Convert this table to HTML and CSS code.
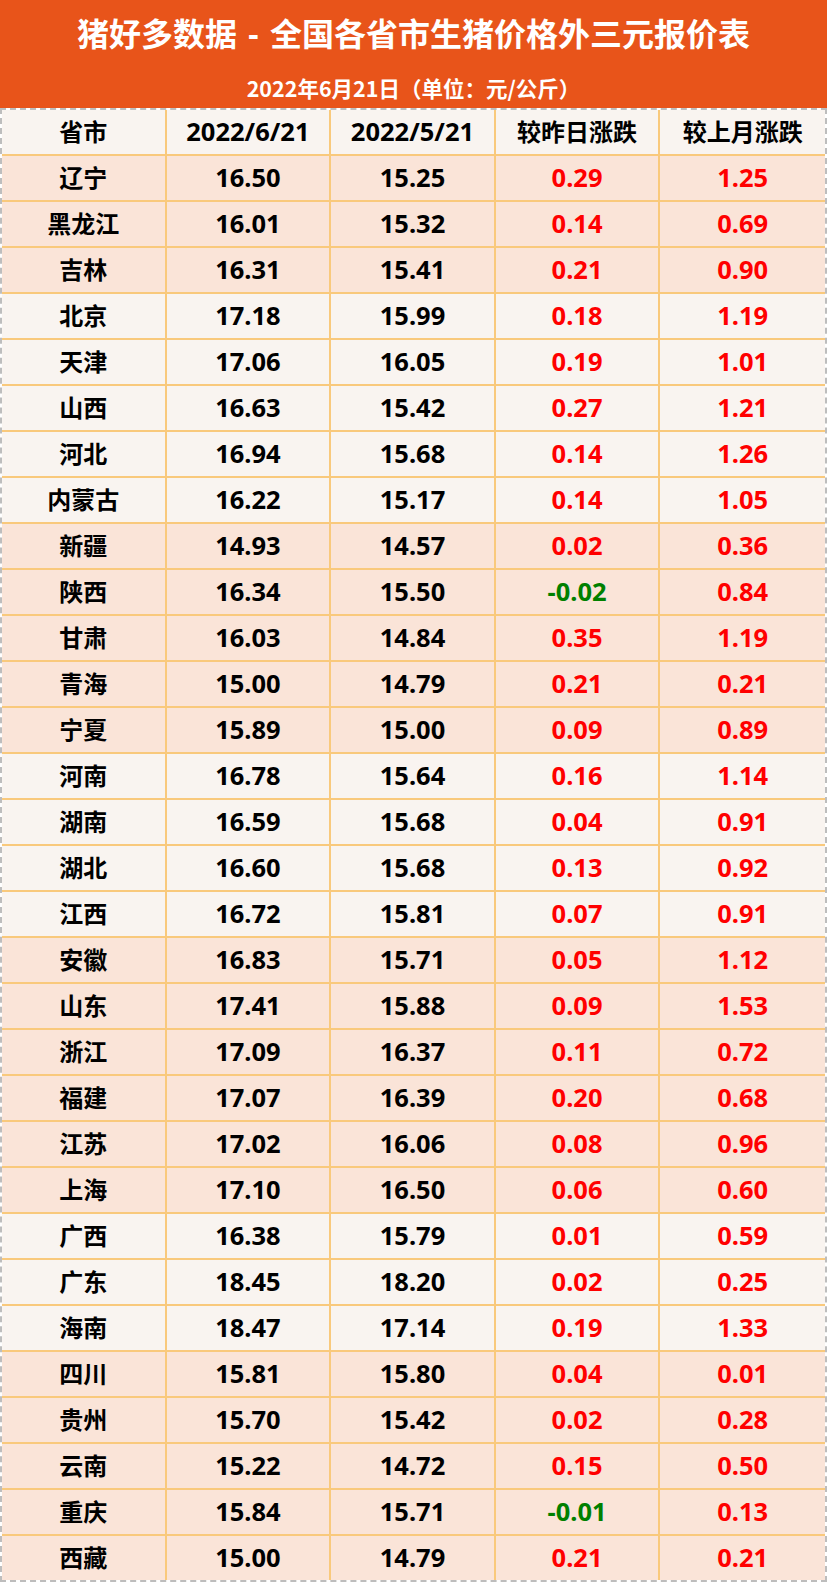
FILE: index.html
```html
<!DOCTYPE html>
<html lang="zh-CN">
<head>
<meta charset="utf-8">
<title>猪好多数据 - 全国各省市生猪价格外三元报价表</title>
<link rel="stylesheet" href="styles.css">
</head>
<body>
<div class="page">
  <header class="banner">
    <h1 class="banner-title">猪好多数据 - 全国各省市生猪价格外三元报价表</h1>
    <p class="banner-sub">2022年6月21日（单位：元/公斤）</p>
  </header>
  <table class="prices">
    <colgroup><col><col><col><col><col></colgroup>
    <thead>
      <tr class="light"><th>省市</th><th class="num">2022/6/21</th><th class="num">2022/5/21</th><th>较昨日涨跌</th><th>较上月涨跌</th></tr>
    </thead>
    <tbody>
      <tr class="peach"><td>辽宁</td><td class="num">16.50</td><td class="num">15.25</td><td class="num up">0.29</td><td class="num up">1.25</td></tr>
      <tr class="peach"><td>黑龙江</td><td class="num">16.01</td><td class="num">15.32</td><td class="num up">0.14</td><td class="num up">0.69</td></tr>
      <tr class="peach"><td>吉林</td><td class="num">16.31</td><td class="num">15.41</td><td class="num up">0.21</td><td class="num up">0.90</td></tr>
      <tr class="light"><td>北京</td><td class="num">17.18</td><td class="num">15.99</td><td class="num up">0.18</td><td class="num up">1.19</td></tr>
      <tr class="light"><td>天津</td><td class="num">17.06</td><td class="num">16.05</td><td class="num up">0.19</td><td class="num up">1.01</td></tr>
      <tr class="light"><td>山西</td><td class="num">16.63</td><td class="num">15.42</td><td class="num up">0.27</td><td class="num up">1.21</td></tr>
      <tr class="light"><td>河北</td><td class="num">16.94</td><td class="num">15.68</td><td class="num up">0.14</td><td class="num up">1.26</td></tr>
      <tr class="light"><td>内蒙古</td><td class="num">16.22</td><td class="num">15.17</td><td class="num up">0.14</td><td class="num up">1.05</td></tr>
      <tr class="peach"><td>新疆</td><td class="num">14.93</td><td class="num">14.57</td><td class="num up">0.02</td><td class="num up">0.36</td></tr>
      <tr class="peach"><td>陕西</td><td class="num">16.34</td><td class="num">15.50</td><td class="num down">-0.02</td><td class="num up">0.84</td></tr>
      <tr class="peach"><td>甘肃</td><td class="num">16.03</td><td class="num">14.84</td><td class="num up">0.35</td><td class="num up">1.19</td></tr>
      <tr class="peach"><td>青海</td><td class="num">15.00</td><td class="num">14.79</td><td class="num up">0.21</td><td class="num up">0.21</td></tr>
      <tr class="peach"><td>宁夏</td><td class="num">15.89</td><td class="num">15.00</td><td class="num up">0.09</td><td class="num up">0.89</td></tr>
      <tr class="light"><td>河南</td><td class="num">16.78</td><td class="num">15.64</td><td class="num up">0.16</td><td class="num up">1.14</td></tr>
      <tr class="light"><td>湖南</td><td class="num">16.59</td><td class="num">15.68</td><td class="num up">0.04</td><td class="num up">0.91</td></tr>
      <tr class="light"><td>湖北</td><td class="num">16.60</td><td class="num">15.68</td><td class="num up">0.13</td><td class="num up">0.92</td></tr>
      <tr class="light"><td>江西</td><td class="num">16.72</td><td class="num">15.81</td><td class="num up">0.07</td><td class="num up">0.91</td></tr>
      <tr class="peach"><td>安徽</td><td class="num">16.83</td><td class="num">15.71</td><td class="num up">0.05</td><td class="num up">1.12</td></tr>
      <tr class="peach"><td>山东</td><td class="num">17.41</td><td class="num">15.88</td><td class="num up">0.09</td><td class="num up">1.53</td></tr>
      <tr class="peach"><td>浙江</td><td class="num">17.09</td><td class="num">16.37</td><td class="num up">0.11</td><td class="num up">0.72</td></tr>
      <tr class="peach"><td>福建</td><td class="num">17.07</td><td class="num">16.39</td><td class="num up">0.20</td><td class="num up">0.68</td></tr>
      <tr class="peach"><td>江苏</td><td class="num">17.02</td><td class="num">16.06</td><td class="num up">0.08</td><td class="num up">0.96</td></tr>
      <tr class="peach"><td>上海</td><td class="num">17.10</td><td class="num">16.50</td><td class="num up">0.06</td><td class="num up">0.60</td></tr>
      <tr class="light"><td>广西</td><td class="num">16.38</td><td class="num">15.79</td><td class="num up">0.01</td><td class="num up">0.59</td></tr>
      <tr class="light"><td>广东</td><td class="num">18.45</td><td class="num">18.20</td><td class="num up">0.02</td><td class="num up">0.25</td></tr>
      <tr class="light"><td>海南</td><td class="num">18.47</td><td class="num">17.14</td><td class="num up">0.19</td><td class="num up">1.33</td></tr>
      <tr class="peach"><td>四川</td><td class="num">15.81</td><td class="num">15.80</td><td class="num up">0.04</td><td class="num up">0.01</td></tr>
      <tr class="peach"><td>贵州</td><td class="num">15.70</td><td class="num">15.42</td><td class="num up">0.02</td><td class="num up">0.28</td></tr>
      <tr class="peach"><td>云南</td><td class="num">15.22</td><td class="num">14.72</td><td class="num up">0.15</td><td class="num up">0.50</td></tr>
      <tr class="peach"><td>重庆</td><td class="num">15.84</td><td class="num">15.71</td><td class="num down">-0.01</td><td class="num up">0.13</td></tr>
      <tr class="peach"><td>西藏</td><td class="num">15.00</td><td class="num">14.79</td><td class="num up">0.21</td><td class="num up">0.21</td></tr>
    </tbody>
  </table>
</div>
</body>
</html>
```

FILE: styles.css
```css
html, body {
  margin: 0;
  padding: 0;
  background: #ffffff;
}

.page {
  width: 827px;
  font-family: "Noto Sans", "Noto Sans CJK SC", sans-serif;
  font-weight: 700;
  color: #000000;
}

.banner {
  height: 108px;
  background: #e8541a;
  color: #ffffff;
  display: flex;
  flex-direction: column;
  align-items: center;
}

.banner-title {
  margin: 0;
  height: 68px;
  display: flex;
  align-items: center;
  font-size: 32px;
  letter-spacing: 0;
  font-weight: 700;
  line-height: 1;
  white-space: nowrap;
  word-spacing: 3px;
}

.banner-sub {
  margin: 0;
  height: 40px;
  display: flex;
  align-items: center;
  font-size: 21.5px;
  line-height: 1;
  white-space: nowrap;
  font-family: "Noto Sans CJK SC", sans-serif;
}

.prices {
  width: 827px;
  table-layout: fixed;
  border-collapse: separate;
  border-spacing: 0;
  border: 2px dashed #bdbdbd;
}

.prices th,
.prices td {
  padding: 0;
  height: 44px;
  text-align: center;
  vertical-align: middle;
  font-size: 24px;
  font-weight: 700;
  line-height: 1;
  white-space: nowrap;
  border-right: 2px solid #f9c97c;
  border-bottom: 2px solid #f9c97c;
}

.prices th:last-child,
.prices td:last-child {
  border-right: none;
}

.prices tbody tr:last-child td {
  border-bottom: none;
}

.prices .num {
  font-size: 25.5px;
}

.light {
  background: #f9f4f0;
}

.peach {
  background: #fae4d8;
}

.up {
  color: #ff0000;
}

.down {
  color: #008000;
}
```
